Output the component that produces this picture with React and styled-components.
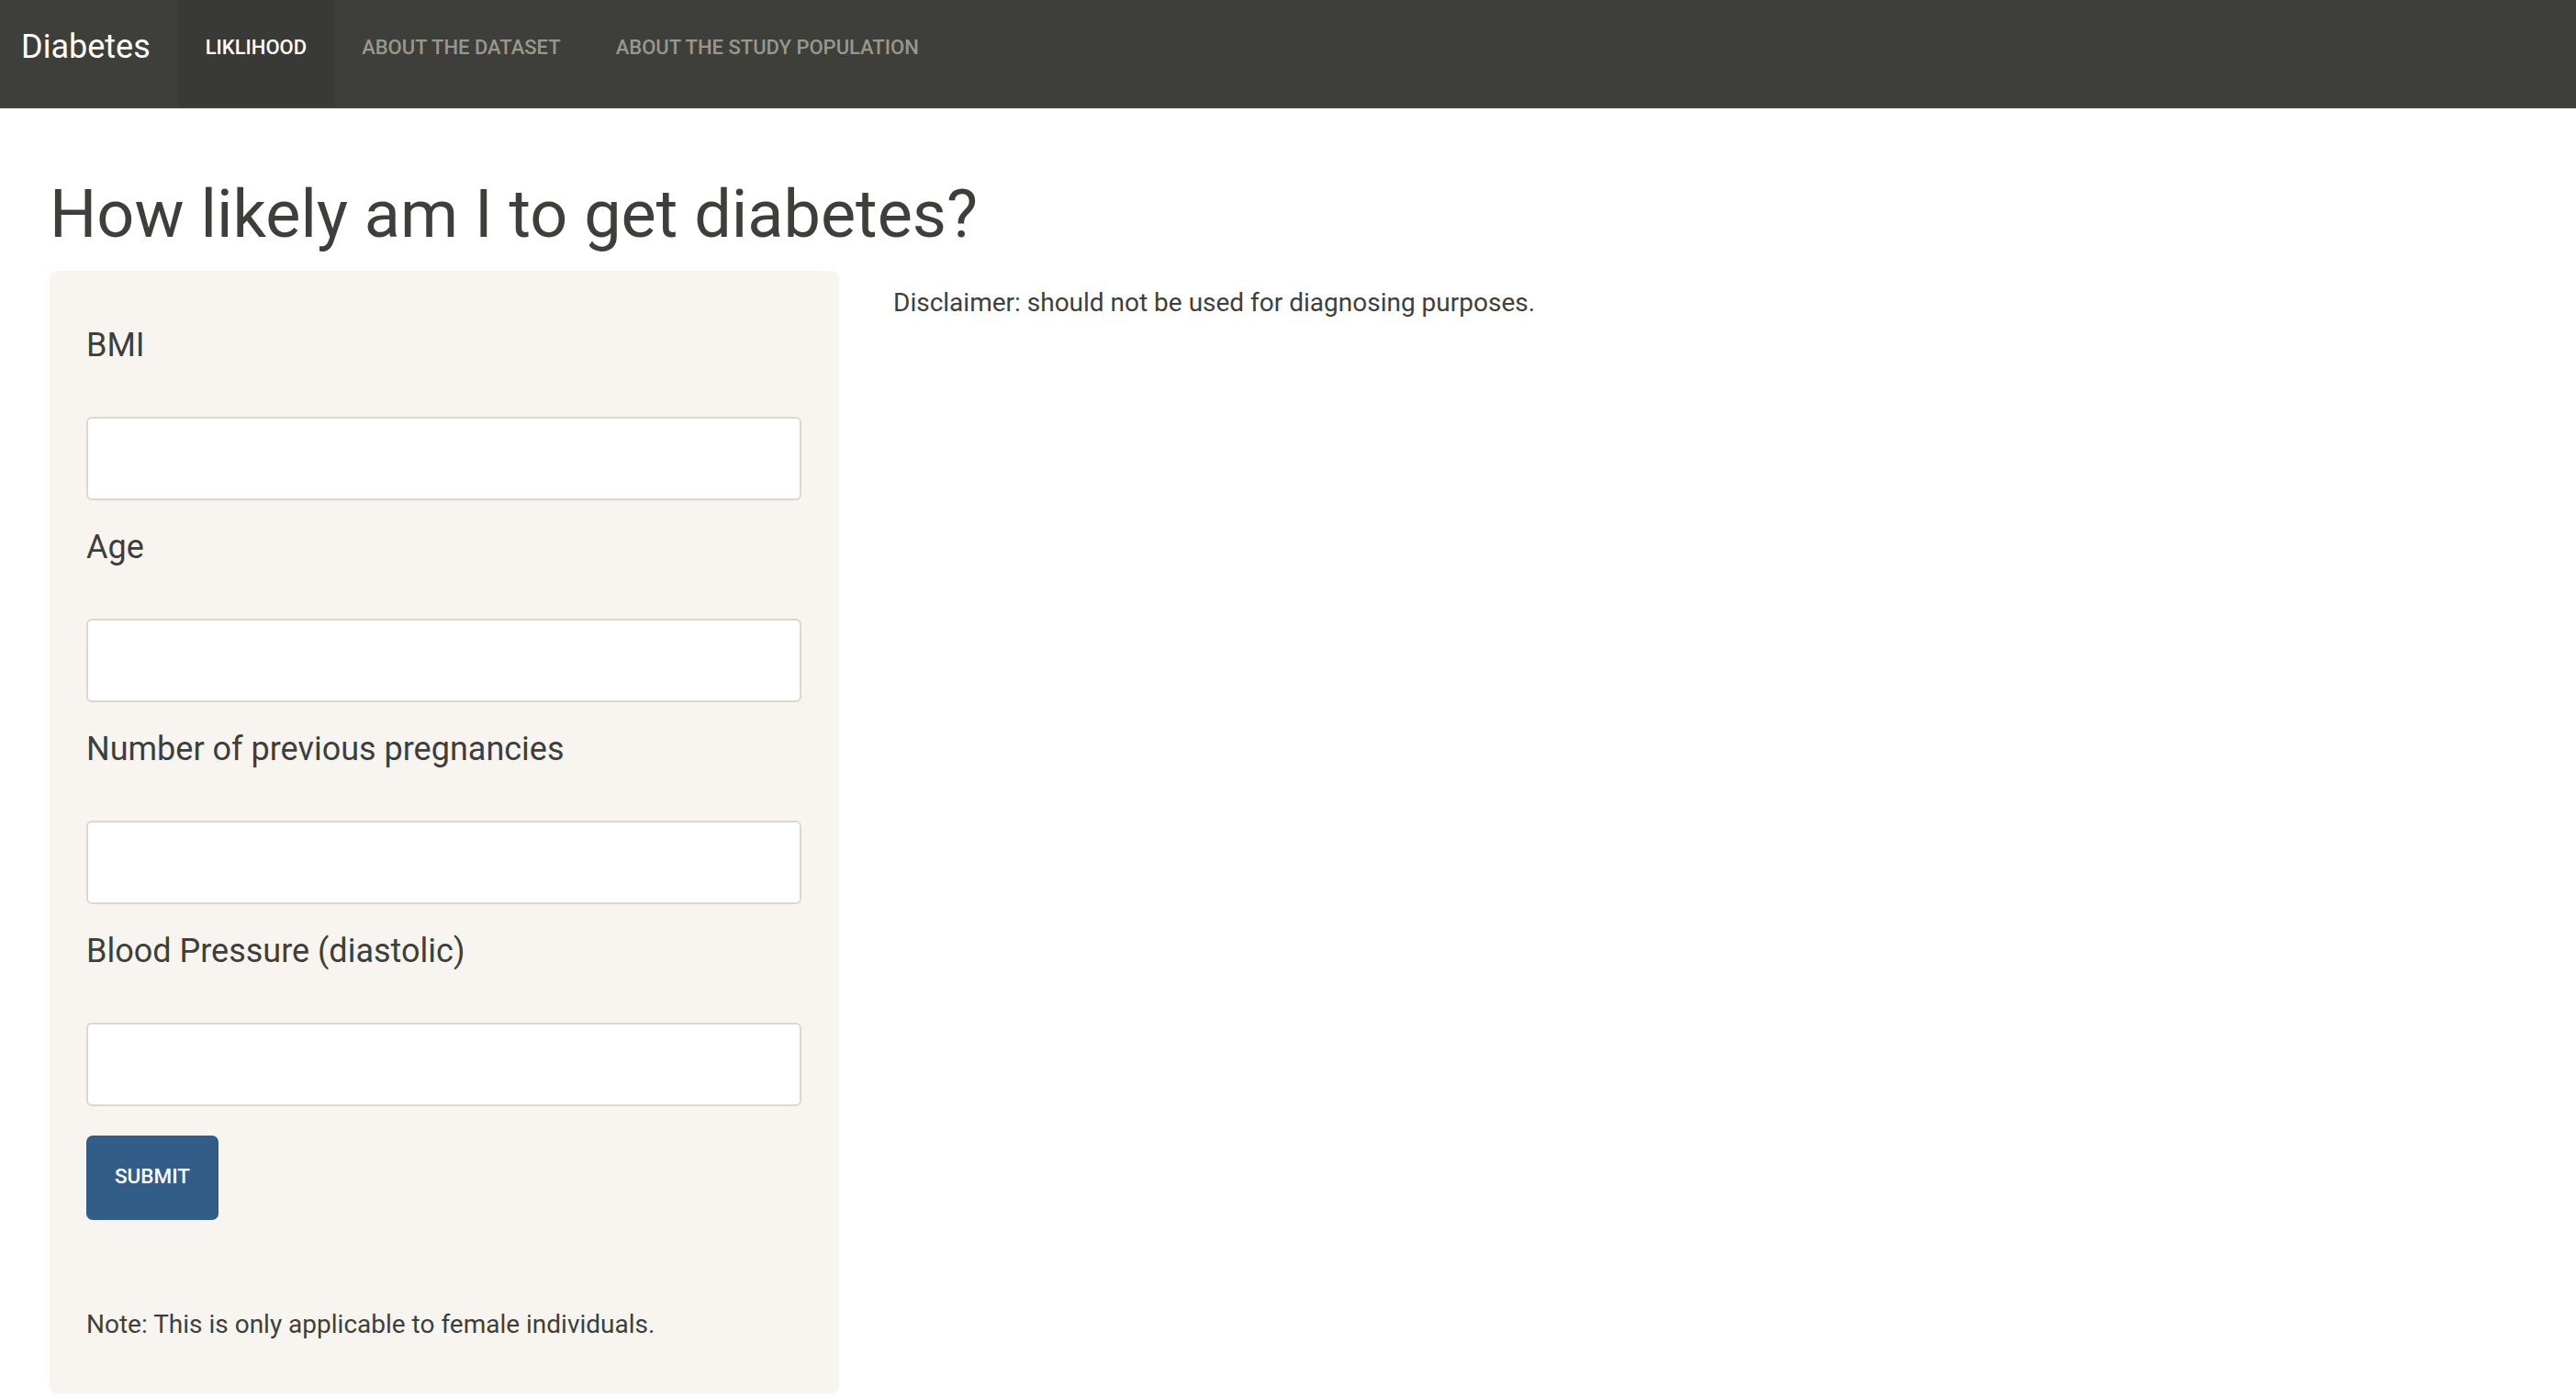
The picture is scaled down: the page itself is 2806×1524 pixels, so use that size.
import React from 'react';
import styled, { createGlobalStyle } from 'styled-components';

const GlobalStyle = createGlobalStyle`
  * { box-sizing: border-box; }
  html, body {
    margin: 0;
    padding: 0;
    background: #fff;
    font-family: Roboto, "Liberation Sans", Arial, sans-serif;
    color: #3e3f3a;
  }
`;

const Navbar = styled.nav`
  height: 118px;
  background: #3e3f3a;
  display: flex;
  align-items: flex-start;
  padding-left: 23px;
`;

const Brand = styled.a`
  font-size: 36px;
  line-height: 54px;
  padding-top: 24px;
  color: #fff;
  text-decoration: none;
  margin-right: 30px;
`;

const NavList = styled.ul`
  display: flex;
  list-style: none;
  margin: 0;
  padding: 0;
`;

const NavLink = styled.a`
  display: block;
  height: 116px;
  padding: 33px 30px 0;
  font-size: 22px;
  line-height: 38.5px;
  font-weight: 500;
  text-transform: uppercase;
  text-decoration: none;
  color: ${(p) => (p.$active ? '#fff' : '#98978b')};
  background: ${(p) => (p.$active ? '#393a35' : 'transparent')};
`;

const Container = styled.main`
  padding: 73px 54px 0;
`;

const Title = styled.h2`
  margin: 0 0 18px;
  font-size: 72px;
  line-height: 86.4px;
  font-weight: 400;
  color: #3e3f3a;
`;

const Row = styled.div`
  display: grid;
  grid-template-columns: 860px 1fr;
  gap: 59px;
  align-items: start;
`;

const Well = styled.form`
  background: #f8f5f0;
  border-radius: 8px;
  padding: 54px 41px 54px 40px;
`;

const Group = styled.div`
  margin-bottom: ${(p) => (p.$last ? '32px' : '24px')};
`;

const Label = styled.label`
  display: block;
  font-size: 36px;
  line-height: 54px;
  margin-bottom: 51px;
  color: #3e3f3a;
`;

const Input = styled.input`
  display: block;
  width: 100%;
  height: 91px;
  border: 2px solid #dfd7ca;
  border-radius: 6px;
  background: #fff;
  font-family: inherit;
  font-size: 28px;
  padding: 0 20px;
  color: #3e3f3a;
  outline: none;
`;

const Button = styled.button`
  width: 144px;
  height: 92px;
  border: none;
  border-radius: 7px;
  padding: 0 0 4px;
  background: #325d88;
  color: #fff;
  font-family: inherit;
  font-size: 22.5px;
  font-weight: 500;
  text-transform: uppercase;
  cursor: pointer;
`;

const Text = styled.p`
  margin: ${(p) => p.$margin || '0'};
  font-size: 28px;
  line-height: 42px;
  color: #3e3f3a;
`;

const fields = [
  { id: 'bmi', label: 'BMI' },
  { id: 'age', label: 'Age' },
  { id: 'preg', label: 'Number of previous pregnancies' },
  { id: 'bp', label: 'Blood Pressure (diastolic)' },
];

const tabs = ['Liklihood', 'About the dataset', 'About the study population'];

export default function App() {
  return (
    <>
      <GlobalStyle />
      <Navbar>
        <Brand href="#">Diabetes</Brand>
        <NavList>
          {tabs.map((t, i) => (
            <li key={t}>
              <NavLink href="#" $active={i === 0}>{t}</NavLink>
            </li>
          ))}
        </NavList>
      </Navbar>
      <Container>
        <Title>How likely am I to get diabetes?</Title>
        <Row>
          <Well onSubmit={(e) => e.preventDefault()}>
            {fields.map((f, i) => (
              <Group key={f.id} $last={i === fields.length - 1}>
                <Label htmlFor={f.id}>{f.label}</Label>
                <Input id={f.id} type="number" />
              </Group>
            ))}
            <Button type="submit">Submit</Button>
            <Text $margin="93px 0 0">Note: This is only applicable to female individuals.</Text>
          </Well>
          <Text $margin="14px 0 0">Disclaimer: should not be used for diagnosing purposes.</Text>
        </Row>
      </Container>
    </>
  );
}
